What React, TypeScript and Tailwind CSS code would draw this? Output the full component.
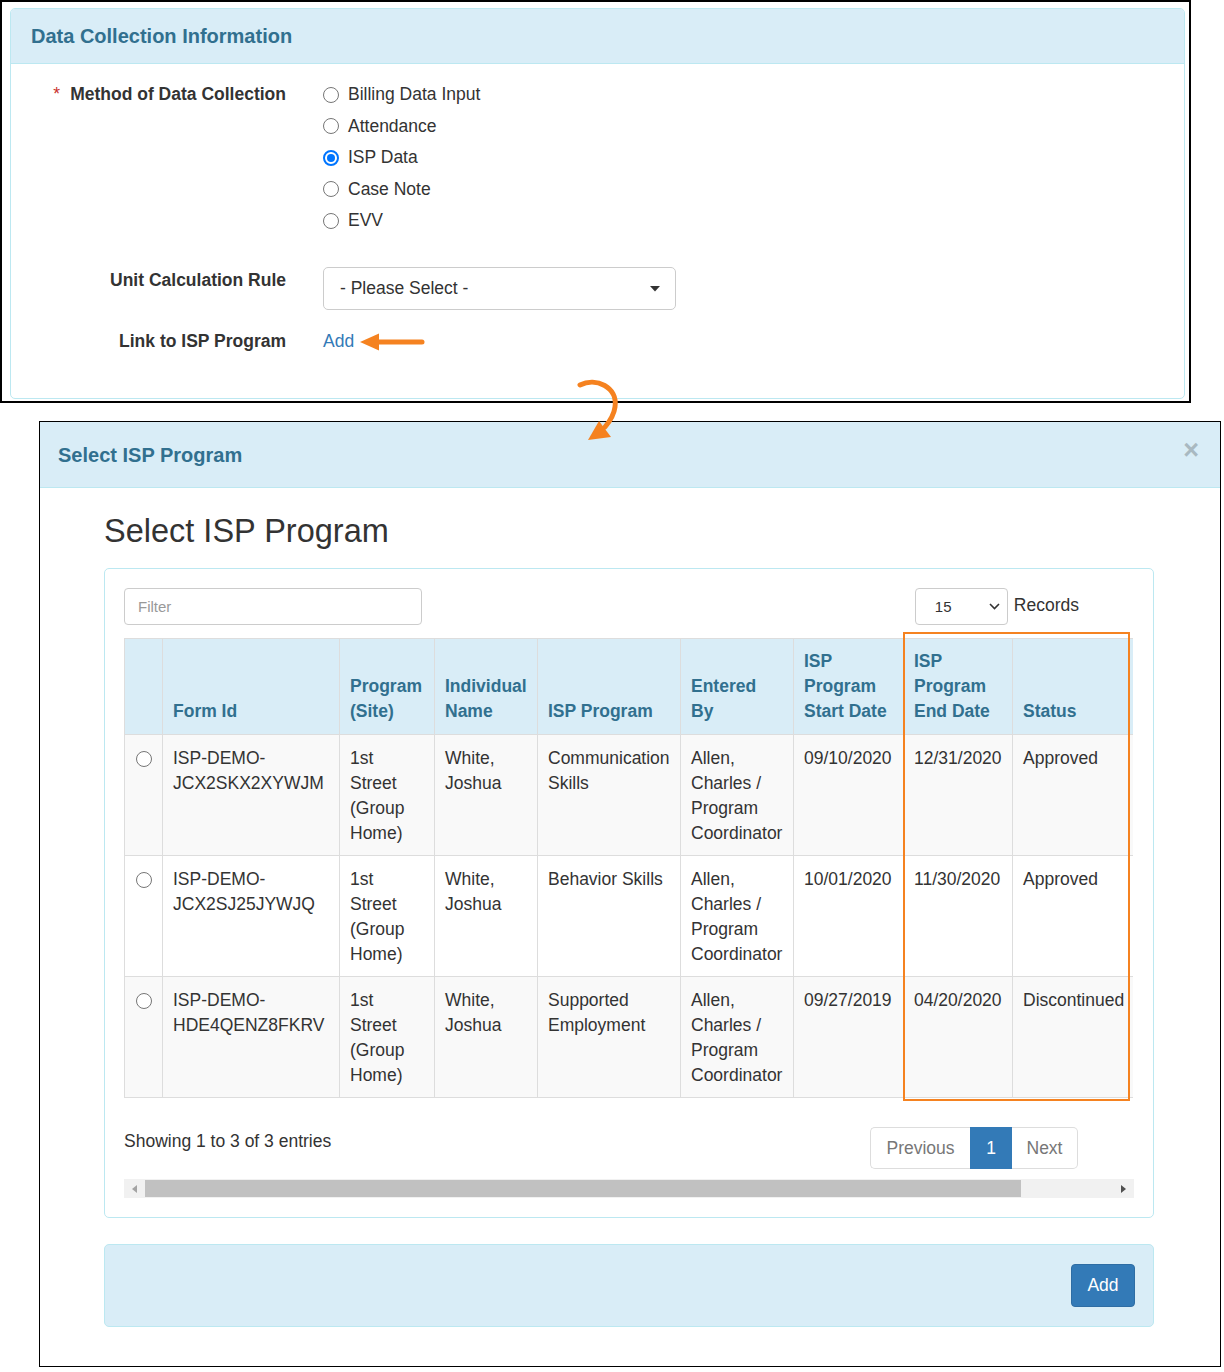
import React from "react";

type IspRow = {
  formId: string[];
  site: string[];
  name: string[];
  program: string[];
  enteredBy: string[];
  start: string;
  end: string;
  status: string;
};

const methods = ["Billing Data Input", "Attendance", "ISP Data", "Case Note", "EVV"];

const columns: { width: string; head: string[] }[] = [
  { width: "w-[38px]", head: [] },
  { width: "w-[177px]", head: ["Form Id"] },
  { width: "w-[95px]", head: ["Program", "(Site)"] },
  { width: "w-[103px]", head: ["Individual", "Name"] },
  { width: "w-[143px]", head: ["ISP Program"] },
  { width: "w-[113px]", head: ["Entered", "By"] },
  { width: "w-[110px]", head: ["ISP", "Program", "Start Date"] },
  { width: "w-[109px]", head: ["ISP", "Program", "End Date"] },
  { width: "w-[130px]", head: ["Status"] },
];

const enteredBy = ["Allen,", "Charles /", "Program", "Coordinator"];
const site = ["1st", "Street", "(Group", "Home)"];

const rows: IspRow[] = [
  {
    formId: ["ISP-DEMO-", "JCX2SKX2XYWJM"],
    site,
    name: ["White,", "Joshua"],
    program: ["Communication", "Skills"],
    enteredBy,
    start: "09/10/2020",
    end: "12/31/2020",
    status: "Approved",
  },
  {
    formId: ["ISP-DEMO-", "JCX2SJ25JYWJQ"],
    site,
    name: ["White,", "Joshua"],
    program: ["Behavior Skills"],
    enteredBy,
    start: "10/01/2020",
    end: "11/30/2020",
    status: "Approved",
  },
  {
    formId: ["ISP-DEMO-", "HDE4QENZ8FKRV"],
    site,
    name: ["White,", "Joshua"],
    program: ["Supported", "Employment"],
    enteredBy,
    start: "09/27/2019",
    end: "04/20/2020",
    status: "Discontinued",
  },
];

const Radio: React.FC<{ checked?: boolean }> = ({ checked }) =>
  checked ? (
    <span className="flex h-4 w-4 shrink-0 items-center justify-center rounded-full border-2 border-[#0075ff] bg-white">
      <span className="h-2 w-2 rounded-full bg-[#0075ff]" />
    </span>
  ) : (
    <span className="h-4 w-4 shrink-0 rounded-full border border-[#767676] bg-white" />
  );

const Lines: React.FC<{ lines: string[] }> = ({ lines }) => (
  <>
    {lines.map((line, i) => (
      <div key={i} className="whitespace-nowrap">
        {line}
      </div>
    ))}
  </>
);

const DataCollectionPanel: React.FC = () => (
  <div className="h-[403px] w-[1191px] border-2 border-black pl-[8px] pt-[6px]">
    <div className="h-[391px] w-[1175px] rounded-[5px] border border-[#bce8f1]">
      <div className="flex h-[55px] items-center rounded-t-[4px] border-b border-[#bce8f1] bg-[#d9edf7] pl-[20px] text-[20px] font-bold text-[#31708f]">
        Data Collection Information
      </div>

      <div className="pt-[18px] text-[17.5px] leading-[25px] text-[#333]">
        {/* Method */}
        <div className="flex">
          <div className="w-[275px] text-right font-bold">
            <span className="mr-[10px] font-normal text-[#c9302c]">*</span>
            Method of Data Collection
          </div>
          <div className="ml-[37px] flex flex-col gap-[6.5px]">
            {methods.map((m) => (
              <label key={m} className="flex h-[25px] items-center gap-[9px]">
                <Radio checked={m === "ISP Data"} />
                {m}
              </label>
            ))}
          </div>
        </div>

        {/* Unit rule */}
        <div className="mt-[34px] flex items-start">
          <div className="mt-[1px] w-[275px] text-right font-bold">Unit Calculation Rule</div>
          <div className="ml-[37px] flex h-[43px] w-[353px] items-center justify-between rounded-[5px] border border-[#ccc] pl-[16px] pr-[15px]">
            <span>- Please Select -</span>
            <svg width="10" height="6" viewBox="0 0 10 6">
              <polygon points="0,0 10,0 5,5.5" fill="#333" />
            </svg>
          </div>
        </div>

        {/* Link */}
        <div className="mt-[19px] flex items-center">
          <div className="w-[275px] text-right font-bold">Link to ISP Program</div>
          <span className="ml-[37px] text-[#337ab7]">Add</span>
          <svg className="ml-[6px]" width="66" height="20" viewBox="0 0 66 20">
            <polygon points="0,10 19,1.5 19,18.5" fill="#f58220" />
            <line x1="16" y1="10" x2="62" y2="10" stroke="#f58220" strokeWidth="5" strokeLinecap="round" />
          </svg>
        </div>
      </div>
    </div>
  </div>
);

const IspTable: React.FC = () => (
  <div className="relative mt-[13px]">
    <div className="w-[1009px] overflow-hidden">
      <table className="w-[1018px] table-fixed border-collapse text-[17.5px] leading-[25px]">
        <colgroup>
          {columns.map((c, i) => (
            <col key={i} className={c.width} />
          ))}
        </colgroup>
        <thead>
          <tr>
            {columns.map((c, i) => (
              <th
                key={i}
                className="border border-[#ddd] bg-[#d9edf7] px-[10px] pb-[10px] pt-[10px] text-left align-bottom font-bold text-[#31708f]">
                <Lines lines={c.head} />
              </th>
            ))}
          </tr>
        </thead>
        <tbody className="text-[#333]">
          {rows.map((r, i) => (
            <tr key={i} className={i % 2 === 0 ? "bg-[#f9f9f9]" : "bg-white"}>
              <td className="border border-[#ddd] pt-[11px] align-top">
                <div className="flex h-[25px] items-center justify-center">
                  <Radio />
                </div>
              </td>
              {[r.formId, r.site, r.name, r.program, r.enteredBy, [r.start], [r.end], [r.status]].map(
                (cell, j) => (
                  <td key={j} className="border border-[#ddd] px-[10px] pb-[9px] pt-[11px] align-top">
                    <Lines lines={cell} />
                  </td>
                )
              )}
            </tr>
          ))}
        </tbody>
      </table>
    </div>
    {/* highlight round the end date and status columns */}
    <div className="pointer-events-none absolute -top-[6px] left-[779px] h-[469px] w-[227px] border-2 border-[#f58220]" />
  </div>
);

const IspProgramModal: React.FC = () => (
  <div className="ml-[39px] mt-[18px] h-[946px] w-[1182px] border border-black">
    <div className="flex h-[66px] items-center justify-between border-b border-[#bce8f1] bg-[#d9edf7] pl-[18px] pr-[21px]">
      <span className="text-[20px] font-bold text-[#31708f]">Select ISP Program</span>
      <span className="-mt-[8px] text-[27px] font-bold leading-none text-[#a9b9c1]">×</span>
    </div>

    <div className="pl-[64px] pr-[66px]">
      <h3 className="mt-[26px] text-[32.5px] leading-[34px] text-[#333]">Select ISP Program</h3>

      <div className="mt-[20px] rounded-[5px] border border-[#bce8f1] p-[19px]">
        {/* Filter + page size */}
        <div className="flex h-[37px] items-center justify-between pr-[55px]">
          <input
            readOnly
            placeholder="Filter"
            className="h-[37px] w-[298px] rounded-[4px] border border-[#ccc] pl-[13px] text-[15px] outline-none placeholder:text-[#999]"
          />
          <div className="flex items-center">
            <div className="flex h-[37px] w-[93px] items-center justify-between rounded-[4px] border border-[#ccc] pl-[19px] pr-[7px] text-[15px] text-[#333]">
              <span className="mt-[2px]">15</span>
              <svg width="11" height="7" viewBox="0 0 11 7">
                <polyline points="1,1 5.5,5.5 10,1" fill="none" stroke="#333" strokeWidth="1.6" />
              </svg>
            </div>
            <span className="-mt-[3px] ml-[6px] text-[17.5px] text-[#333]">Records</span>
          </div>
        </div>

        <IspTable />

        {/* Info + paging */}
        <div className="mt-[29px] flex items-start justify-between pr-[56px] text-[17.5px]">
          <span className="mt-[2px] leading-[25px] text-[#333]">Showing 1 to 3 of 3 entries</span>
          <div className="flex h-[42px] text-[#777]">
            <span className="flex w-[100px] items-center justify-center rounded-l-[5px] border border-r-0 border-[#ddd]">
              Previous
            </span>
            <span className="flex w-[42px] items-center justify-center border border-[#337ab7] bg-[#337ab7] text-white">
              1
            </span>
            <span className="flex w-[66px] items-center justify-center rounded-r-[5px] border border-l-0 border-[#ddd]">
              Next
            </span>
          </div>
        </div>

        {/* Horizontal scrollbar */}
        <div className="mt-[10px] flex h-[19px] items-center bg-[#f1f1f1]">
          <span className="flex w-[21px] justify-center">
            <svg width="5" height="8" viewBox="0 0 5 8">
              <polygon points="5,0 5,8 0,4" fill="#a3a3a3" />
            </svg>
          </span>
          <span className="h-[17px] w-[876px] bg-[#c1c1c1]" />
          <span className="flex-1" />
          <span className="flex w-[21px] justify-center">
            <svg width="5" height="8" viewBox="0 0 5 8">
              <polygon points="0,0 0,8 5,4" fill="#505050" />
            </svg>
          </span>
        </div>
      </div>

      {/* Footer */}
      <div className="mt-[26px] flex h-[83px] items-center justify-end rounded-[5px] border border-[#bce8f1] bg-[#d9edf7] pr-[18px]">
        <button className="h-[43px] w-[64px] rounded-[4px] border border-[#2e6da4] bg-[#337ab7] text-[17.5px] text-white">
          Add
        </button>
      </div>
    </div>
  </div>
);

const App: React.FC = () => (
  <div className="relative h-[1372px] w-[1224px] overflow-hidden bg-white font-['Liberation_Sans',Arial,sans-serif]">
    <DataCollectionPanel />
    <IspProgramModal />

    {/* curved pointer from the Add link down to the dialog */}
    <svg className="pointer-events-none absolute left-[570px] top-[375px]" width="60" height="75" viewBox="0 0 60 75">
      <path
        d="M10 10 C 26 2, 48 12, 45 32 C 44 40, 40 46, 35 52"
        fill="none"
        stroke="#f58220"
        strokeWidth="5"
        strokeLinecap="round"
      />
      <polygon points="18,65 29,46 41,62" fill="#f58220" />
    </svg>
  </div>
);

export default App;
